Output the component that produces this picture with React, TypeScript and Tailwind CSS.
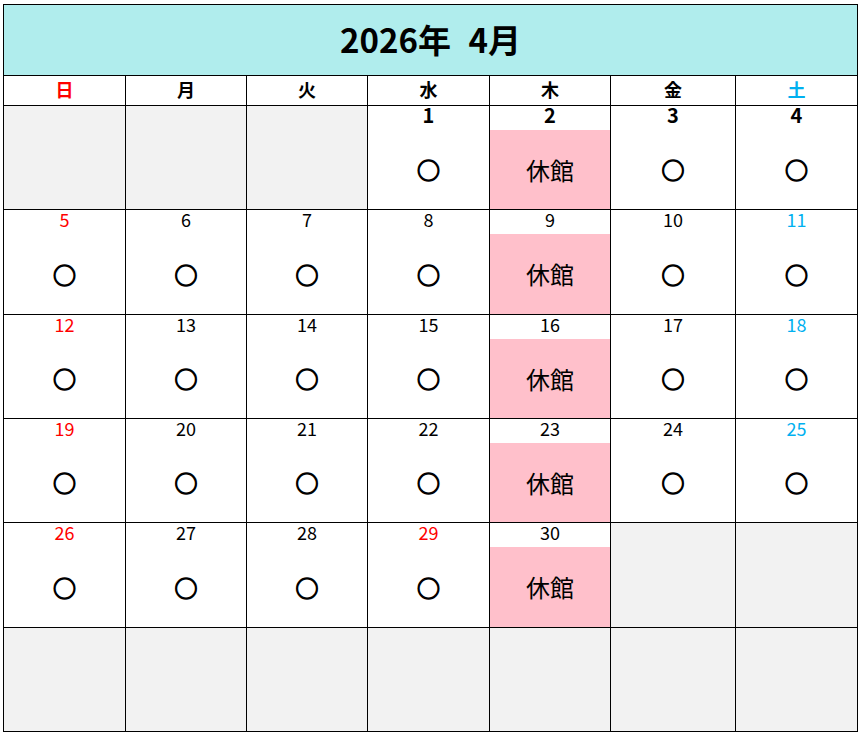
import React from "react"

type Cell = { day: number | null; open: boolean }

const weekNames = ["日", "月", "火", "水", "木", "金", "土"]
const holidays = [29]

function buildCells(): Cell[] {
  // 2026年4月1日は水曜日
  const start = 3
  const cells: Cell[] = []
  for (let i = 0; i < 42; i++) {
    const d = i - start + 1
    if (d < 1 || d > 30) cells.push({ day: null, open: false })
    else cells.push({ day: d, open: i % 7 !== 4 })
  }
  return cells
}

function dayColor(col: number, day: number, firstRow: boolean) {
  if (firstRow) return "text-black"
  if (col === 0 || holidays.includes(day)) return "text-[#ff0000]"
  if (col === 6) return "text-[#00b0f0]"
  return "text-black"
}

export default function App() {
  const cells = buildCells()
  const font = { fontFamily: '"Noto Sans CJK JP", "Noto Sans", sans-serif' }

  return (
    <div className="w-[862px] h-[734px] bg-white pl-[3px] pt-[4px]" style={font}>
      <div className="w-[855px] h-[728px] bg-black p-px grid gap-px grid-cols-[121px_120px_120px_121px_120px_124px_121px] grid-rows-[70px_29px_103px_104px_103px_103px_104px_103px]">
        {/* Title */}
        <div className="col-span-7 bg-[#b0eded] flex items-center justify-center pb-[2px]">
          <span className="text-[33px] font-bold text-black leading-none [word-spacing:10px]">2026年 4月</span>
        </div>

        {/* Week names */}
        {weekNames.map((w, i) => (
          <div
            key={w}
            className={`bg-white flex items-center justify-center pb-[4px] text-[18px] font-bold leading-none ${
              i === 0 ? "text-[#ff0000]" : i === 6 ? "text-[#00b0f0]" : "text-black"
            }`}
          >
            {w}
          </div>
        ))}

        {/* Days */}
        {cells.map((c, i) => {
          const col = i % 7
          if (c.day === null) return <div key={i} className="bg-[#f2f2f2]" />
          const firstRow = i < 7
          return (
            <div key={i} className="bg-white flex flex-col">
              <div
                className={`h-[24px] pb-[6px] flex items-center justify-center leading-none ${
                  firstRow ? "text-[20px] font-bold" : "text-[18px]"
                } ${dayColor(col, c.day, firstRow)}`}
              >
                {c.day}
              </div>
              {c.open ? (
                <div className="flex-1 flex items-center justify-center">
                  <span className="text-[23px] leading-none text-black [-webkit-text-stroke:1.3px_black]">○</span>
                </div>
              ) : (
                <div className="flex-1 bg-[#ffc0cb] flex items-center justify-center">
                  <span className="text-[24px] leading-none text-black">休館</span>
                </div>
              )}
            </div>
          )
        })}
      </div>
    </div>
  )
}
